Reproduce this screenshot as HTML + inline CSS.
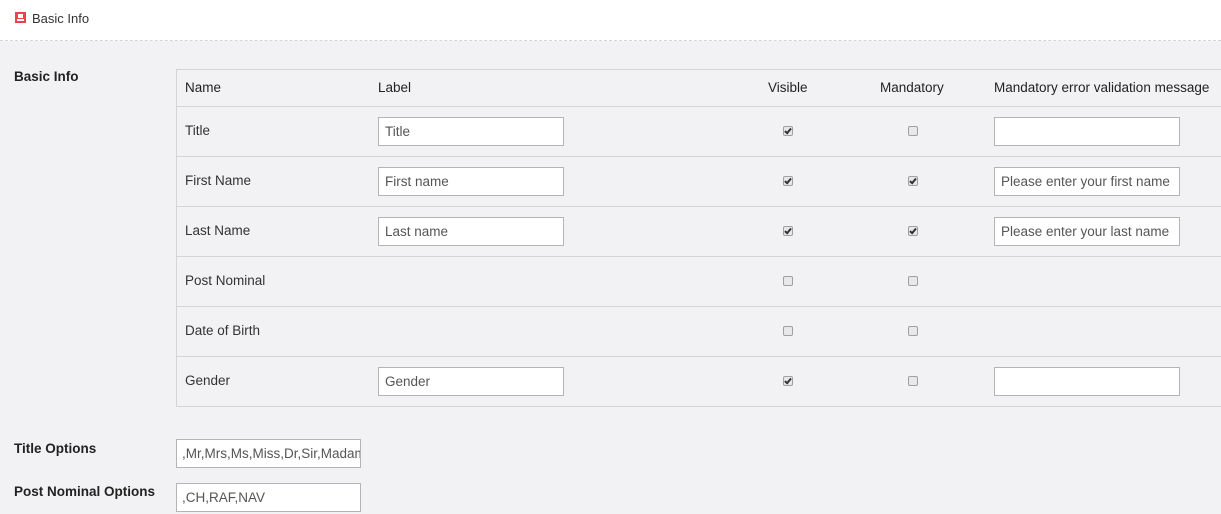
<!DOCTYPE html>
<html><head><meta charset="utf-8"><style>
*{box-sizing:border-box;margin:0;padding:0}
body{width:1221px;height:514px;overflow:hidden;background:#f2f2f4;font-family:"Liberation Sans",sans-serif;font-size:13.5px;color:#333;position:relative}
.hdr{position:absolute;left:0;top:0;width:1221px;height:41px;background:#fff;border-bottom:1px dashed #d4d4d4}
.hdr .t{position:absolute;left:32px;top:11px;font-size:13px;color:#333}
.ico{position:absolute;left:15px;top:12px;width:11px;height:11px;background:#e8434f}
.ico:after{content:"";position:absolute;left:3px;top:2px;width:5px;height:4px;background:#fff}
.ico:before{content:"";position:absolute;left:2px;top:7px;width:7px;height:2px;background:#fff}
.a{position:absolute}
.b{font-weight:bold;color:#222}
.tbl{position:absolute;left:176px;top:69px;width:1046px;height:338px;border:1px solid #d4d4d4;border-right:none}
.row{position:absolute;left:0;width:1046px;border-bottom:1px solid #d4d4d4}
.inp{position:absolute;height:29px;width:186px;background:#fff;border:1px solid #b4b4b4;padding:0 6px;line-height:27px;color:#555;white-space:nowrap;overflow:hidden}
.cb{position:absolute;width:10px;height:10px;border:1px solid #a0a0a0;border-radius:2px;background:#e8e8e8}
.cb.c:after{content:"";position:absolute;left:2px;top:0px;width:2px;height:5px;border:solid #333;border-width:0 2px 2px 0;transform:rotate(40deg)}
</style></head><body>
<div class="hdr"><div class="ico"></div><div class="t">Basic Info</div></div>
<div class="a b" style="left:14px;top:69px">Basic Info</div>
<div class="tbl">
<div class="row" style="top:0;height:37px"></div>
<div class="row" style="top:37px;height:50px"></div>
<div class="row" style="top:87px;height:50px"></div>
<div class="row" style="top:137px;height:50px"></div>
<div class="row" style="top:187px;height:50px"></div>
<div class="row" style="top:237px;height:50px"></div>
</div>
<div class="a" style="left:185px;top:80px;color:#222">Name</div>
<div class="a" style="left:378px;top:80px;color:#222">Label</div>
<div class="a" style="left:768px;top:80px;color:#222">Visible</div>
<div class="a" style="left:880px;top:80px;color:#222">Mandatory</div>
<div class="a" style="left:994px;top:80px;color:#222">Mandatory error validation message</div>

<div class="a" style="left:185px;top:123px">Title</div>
<div class="inp" style="left:378px;top:117px">Title</div>
<div class="cb c" style="left:783px;top:126px"></div><div class="cb" style="left:908px;top:126px"></div>
<div class="inp" style="left:994px;top:117px"></div>

<div class="a" style="left:185px;top:173px">First Name</div>
<div class="inp" style="left:378px;top:167px">First name</div>
<div class="cb c" style="left:783px;top:176px"></div><div class="cb c" style="left:908px;top:176px"></div>
<div class="inp" style="left:994px;top:167px">Please enter your first name</div>

<div class="a" style="left:185px;top:223px">Last Name</div>
<div class="inp" style="left:378px;top:217px">Last name</div>
<div class="cb c" style="left:783px;top:226px"></div><div class="cb c" style="left:908px;top:226px"></div>
<div class="inp" style="left:994px;top:217px">Please enter your last name</div>

<div class="a" style="left:185px;top:273px">Post Nominal</div>
<div class="cb" style="left:783px;top:276px"></div><div class="cb" style="left:908px;top:276px"></div>

<div class="a" style="left:185px;top:323px">Date of Birth</div>
<div class="cb" style="left:783px;top:326px"></div><div class="cb" style="left:908px;top:326px"></div>

<div class="a" style="left:185px;top:373px">Gender</div>
<div class="inp" style="left:378px;top:367px">Gender</div>
<div class="cb c" style="left:783px;top:376px"></div><div class="cb" style="left:908px;top:376px"></div>
<div class="inp" style="left:994px;top:367px"></div>

<div class="a b" style="left:14px;top:441px">Title Options</div>
<div class="inp" style="left:176px;top:439px;width:185px;padding:0 5px">,Mr,Mrs,Ms,Miss,Dr,Sir,Madam</div>
<div class="a b" style="left:14px;top:484px">Post Nominal Options</div>
<div class="inp" style="left:176px;top:483px;width:185px;padding:0 5px">,CH,RAF,NAV</div>
</body></html>
